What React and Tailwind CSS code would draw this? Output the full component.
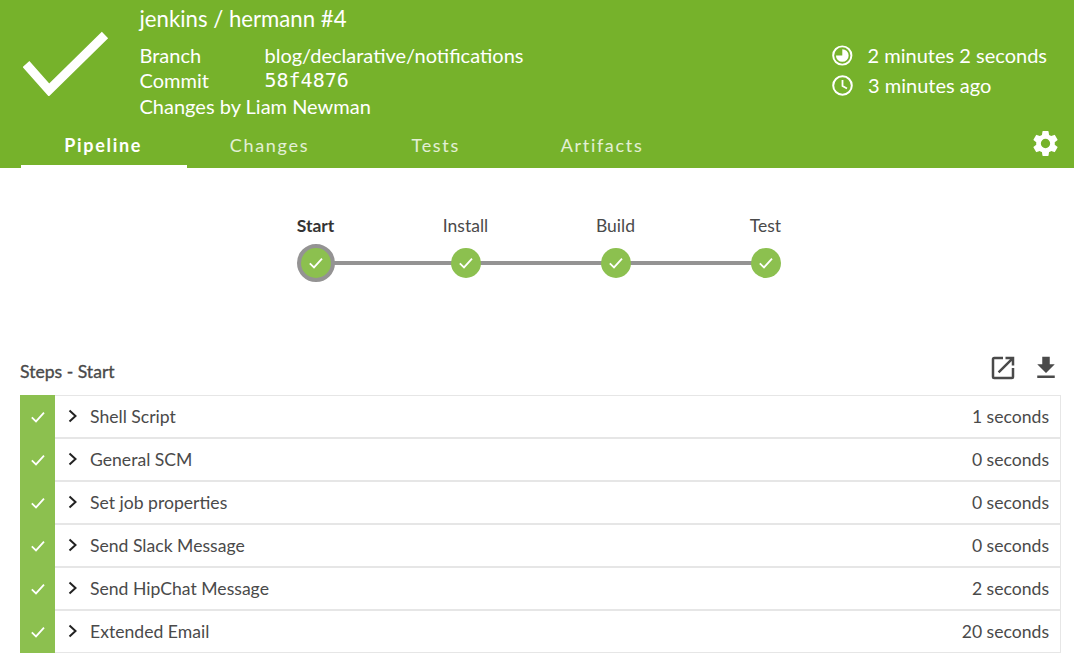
import React from 'react';

const stages = [
    { name: 'Start', selected: true },
    { name: 'Install' },
    { name: 'Build' },
    { name: 'Test' },
];

const steps = [
    { name: 'Shell Script', time: '1 seconds' },
    { name: 'General SCM', time: '0 seconds' },
    { name: 'Set job properties', time: '0 seconds' },
    { name: 'Send Slack Message', time: '0 seconds' },
    { name: 'Send HipChat Message', time: '2 seconds' },
    { name: 'Extended Email', time: '20 seconds' },
];

const tabs = ['Pipeline', 'Changes', 'Tests', 'Artifacts'];

const Check = ({ className }) => (
    <svg className={className} viewBox="0 0 16 16" fill="none" stroke="#fff" strokeWidth="1.8">
        <path d="M1.8 8.4L6 12.4L14 3.6" />
    </svg>
);

const DetailRow = ({ label, children }) => (
    <div className="flex h-[25.5px] items-center">
        <span className="w-[125px]">{label}</span>
        {children}
    </div>
);

const App = () => {
    return (
        <div className="h-[671px] w-[1074px] overflow-hidden bg-white font-['Lato','Noto_Sans',sans-serif] text-[#4a4a4a]">
            {/* Header */}
            <div className="flex h-[168px] flex-col bg-[#76b22b] text-white">
                <div className="flex h-[125px] items-start">
                    <div className="flex w-[139.5px] shrink-0 pl-[23px] pt-[30px]">
                        <svg width="86" height="66" viewBox="0 0 86 66" fill="none" stroke="#fff" strokeWidth="9">
                            <path d="M3 34L26 60L82 5" />
                        </svg>
                    </div>
                    <div className="flex-1">
                        <div className="flex h-[38px] items-center text-[22.2px] leading-none">jenkins / hermann #4</div>
                        <div className="mt-[4px] text-[20px] leading-none">
                            <DetailRow label="Branch">
                                <span>blog/declarative/notifications</span>
                            </DetailRow>
                            <DetailRow label="Commit">
                                <span className="font-['DejaVu_Sans_Mono',monospace] text-[20px]">58f4876</span>
                            </DetailRow>
                            <div className="flex h-[25.5px] items-center">Changes by Liam Newman</div>
                        </div>
                    </div>
                    <div className="mr-[27px] mt-[40px] w-[215px] whitespace-nowrap text-[20px] leading-none">
                        <div className="flex h-[30px] items-center gap-[15px]">
                            <svg width="21" height="21" viewBox="0 0 21 21" fill="none">
                                <circle cx="10.5" cy="10.5" r="9.3" stroke="#fff" strokeWidth="2" />
                                <path d="M10.5 4A6.5 6.5 0 1 1 4 10.5H10.5Z" fill="#fff" />
                            </svg>
                            <span>2 minutes 2 seconds</span>
                        </div>
                        <div className="flex h-[30px] items-center gap-[15px]">
                            <svg width="21" height="21" viewBox="0 0 21 21" fill="none" stroke="#fff">
                                <circle cx="10.5" cy="10.5" r="9.3" strokeWidth="2" />
                                <path d="M10.5 5V11L15 13.5" strokeWidth="1.8" />
                            </svg>
                            <span>3 minutes ago</span>
                        </div>
                    </div>
                </div>
                <div className="flex h-[43px] items-stretch pl-[21px] pr-[13px]">
                    {tabs.map((tab, i) => (
                        <div
                            key={tab}
                            className={`flex w-[166.3px] items-center justify-center border-b-[3px] pr-[2px] text-[18px] tracking-[1.7px] ${i === 0 ? 'border-white font-bold' : 'border-transparent text-white/80'}`}
                        >
                            {tab}
                        </div>
                    ))}
                    <div className="ml-auto flex items-start pt-[3px]">
                        <svg width="31" height="31" viewBox="0 0 24 24" fill="#fff">
                            <path d="M19.14 12.94c.04-.3.06-.61.06-.94s-.02-.64-.07-.94l2.03-1.58a.49.49 0 0 0 .12-.61l-1.92-3.32a.49.49 0 0 0-.59-.22l-2.39.96a7 7 0 0 0-1.62-.94l-.36-2.54a.48.48 0 0 0-.48-.41h-3.84a.47.47 0 0 0-.47.41l-.36 2.54c-.59.24-1.13.57-1.62.94l-2.39-.96a.48.48 0 0 0-.59.22L2.74 8.87a.47.47 0 0 0 .12.61l2.03 1.58c-.05.3-.09.63-.09.94s.02.64.07.94l-2.03 1.58a.49.49 0 0 0-.12.61l1.92 3.32c.12.22.37.29.59.22l2.39-.96c.5.38 1.03.7 1.62.94l.36 2.54c.05.24.24.41.48.41h3.84c.24 0 .44-.17.47-.41l.36-2.54c.59-.24 1.13-.56 1.62-.94l2.39.96c.22.08.47 0 .59-.22l1.92-3.32a.47.47 0 0 0-.12-.61l-2.01-1.58zM12 15.6A3.6 3.6 0 1 1 12 8.4a3.6 3.6 0 0 1 0 7.2z" />
                        </svg>
                    </div>
                </div>
            </div>

            {/* Pipeline graph */}
            <div className="flex h-[185px] justify-center pl-[7px] pt-[47px]">
                <div className="relative flex h-[70px]">
                    <div className="absolute left-[75px] right-[75px] top-[46px] h-[3.5px] bg-[#949393]" />
                    {stages.map((stage) => (
                        <div key={stage.name} className="relative flex w-[150px] flex-col items-center">
                            <div className={`flex h-[22px] items-center text-[17.5px] leading-none ${stage.selected ? 'font-bold text-[#333]' : ''}`}>
                                {stage.name}
                            </div>
                            <div className="mt-[7px] flex h-[38px] w-[38px] items-center justify-center">
                                <div className={`flex items-center justify-center rounded-full bg-[#8cc04f] ${stage.selected ? 'h-[38px] w-[38px] border-[4px] border-[#949393]' : 'h-[30px] w-[30px]'}`}>
                                    <Check className="h-[16px] w-[16px]" />
                                </div>
                            </div>
                        </div>
                    ))}
                </div>
            </div>

            {/* Steps */}
            <div className="pl-[20px] pr-[13px]">
                <div className="flex h-[41px] items-start justify-between">
                    <span className="mt-[6px] text-[17.6px] leading-[26px] text-[#4a4a4a] [-webkit-text-stroke:0.35px_#4a4a4a]">Steps - Start</span>
                    <div className="flex items-center gap-[13px]">
                        <svg width="30" height="30" viewBox="0 0 24 24" fill="#4a4a4a">
                            <path d="M19 19H5V5h7V3H5a2 2 0 0 0-2 2v14a2 2 0 0 0 2 2h14a2 2 0 0 0 2-2v-7h-2v7zM14 3v2h3.59l-9.83 9.83 1.41 1.41L19 6.41V10h2V3h-7z" />
                        </svg>
                        <svg width="30" height="30" viewBox="0 0 24 24" fill="#4a4a4a">
                            <path d="M19 9h-4V3H9v6H5l7 7 7-7zM5 18v2h14v-2H5z" />
                        </svg>
                    </div>
                </div>
                <div className="mt-[1px]">
                    {steps.map((step) => (
                        <div key={step.name} className="flex h-[43px]">
                            <div className="flex w-[35px] shrink-0 items-center justify-center bg-[#8cc04f]">
                                <Check className="h-[16px] w-[16px]" />
                            </div>
                            <div className="flex flex-1 items-center border-y border-r border-[#e6e6e6] pr-[11px] pt-[2px] text-[17.6px]">
                                <svg className="mb-[3px] ml-[13px]" width="10" height="14" viewBox="0 0 10 14" fill="none" stroke="#222" strokeWidth="2">
                                    <path d="M1.5 1.5L7.5 7L1.5 12.5" />
                                </svg>
                                <span className="ml-[12px]">{step.name}</span>
                                <span className="ml-auto">{step.time}</span>
                            </div>
                        </div>
                    ))}
                </div>
            </div>
        </div>
    );
};

export default App;
